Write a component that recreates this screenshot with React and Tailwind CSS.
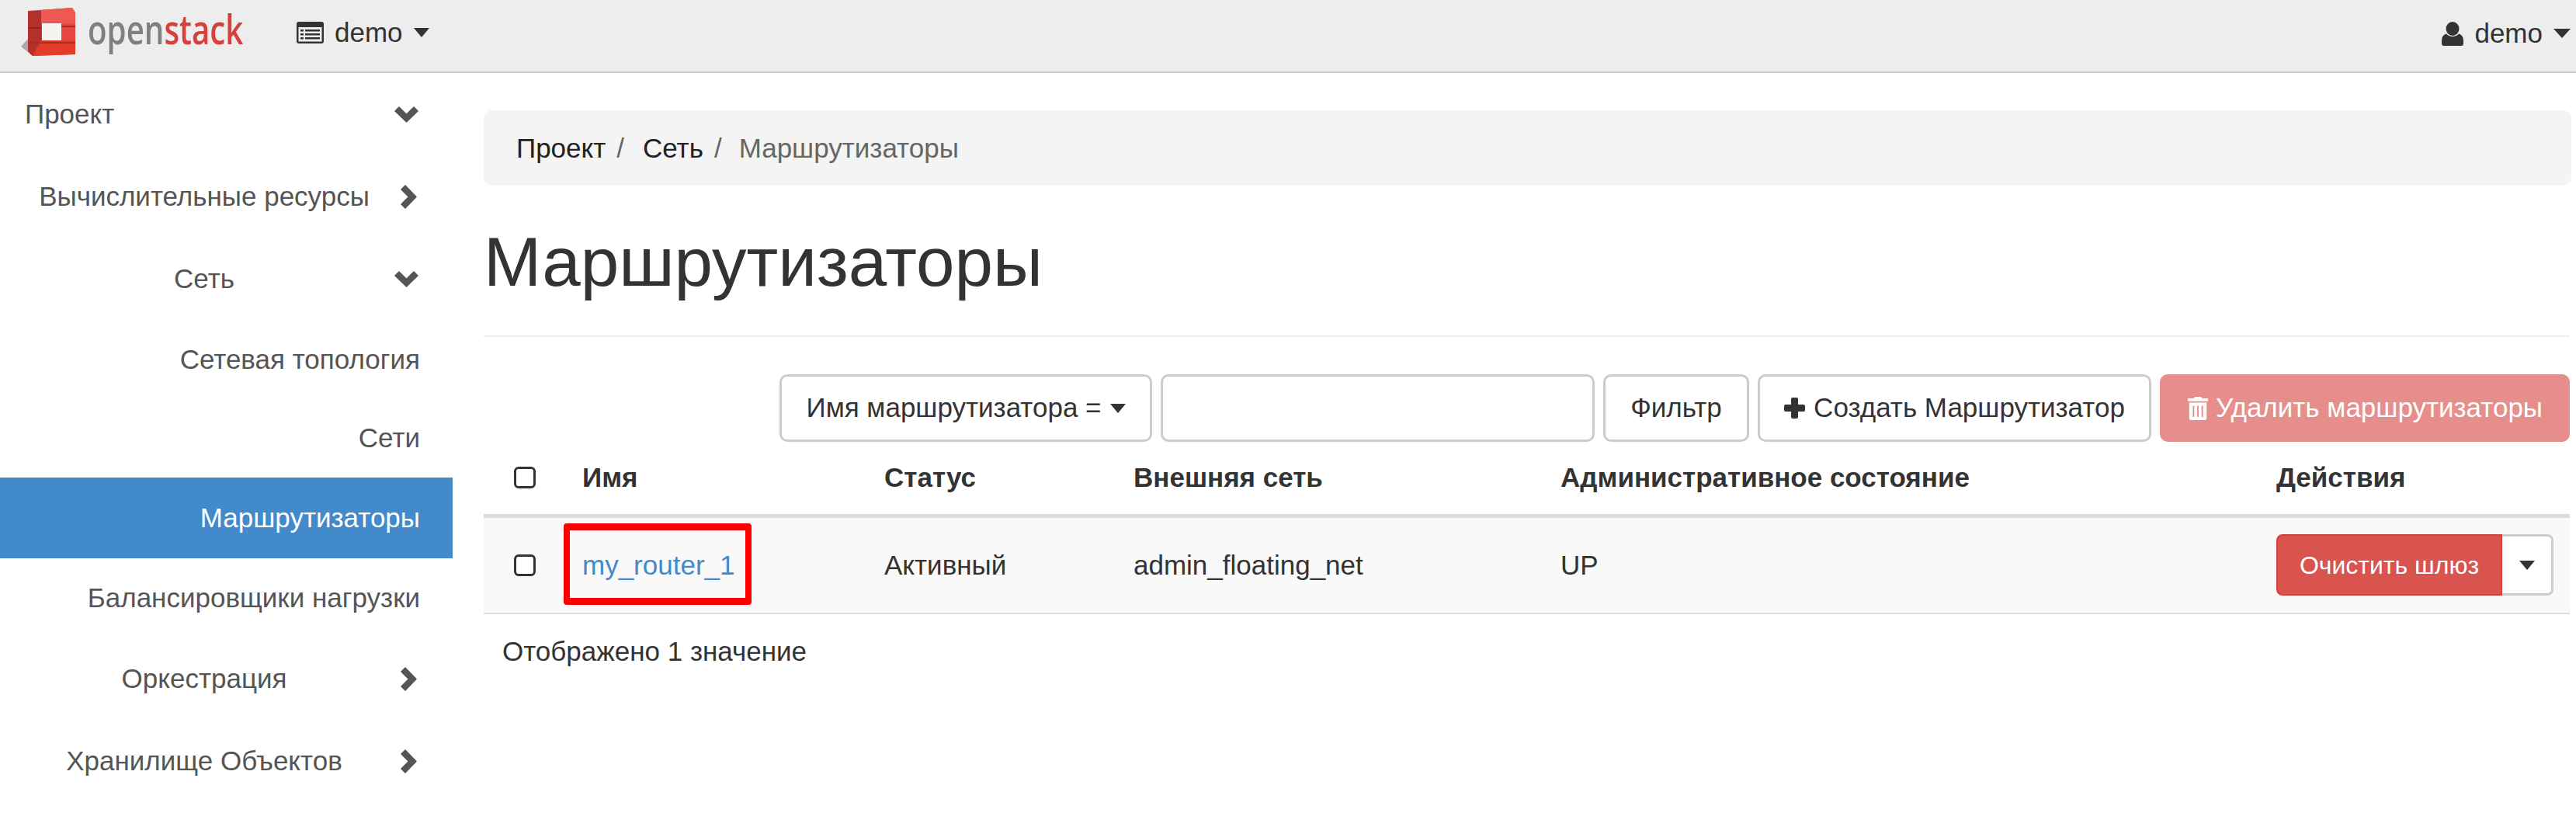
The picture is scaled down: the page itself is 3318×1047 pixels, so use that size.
import { FaTrashAlt } from 'react-icons/fa';

const Caret = ({ className = '' }) => (
  <span className={`inline-block w-0 h-0 border-x-[10px] border-t-[12px] border-x-transparent border-t-[#333] ${className}`}></span>
);

const ChevronRight = ({ className = '' }) => (
  <svg viewBox="0 0 21 31" className={`w-[21px] h-[31px] shrink-0 ${className}`}>
    <path d="M6 1 L20 15.5 L6 30 L1 25 L10.5 15.5 L1 6 Z" fill="#555" stroke="#555" strokeWidth="1.5" strokeLinejoin="round" />
  </svg>
);

const ChevronDown = ({ className = '' }) => (
  <svg viewBox="0 0 31 21" className={`w-[31px] h-[21px] shrink-0 ${className}`}>
    <path d="M1 6 L6 1 L15.5 10.5 L25 1 L30 6 L15.5 20 Z" fill="#555" stroke="#555" strokeWidth="1.5" strokeLinejoin="round" />
  </svg>
);

const Logo = () => (
  <svg viewBox="0 0 340 92" className="w-[340px] h-[92px] shrink-0 blur-[0.6px]">
    <polygon points="27,60 36,50 42,72" fill="#aaa" />
    <polygon points="36,14 93,10 97,16 97,70 42,72 36,66" fill="#d8392c" />
    <polygon points="36,14 53,14 53,66 42,72 36,66" fill="#b5302a" />
    <polygon points="53,13 93,10 97,16 97,30 53,30" fill="#ee5853" />
    <polygon points="53,52 97,52 97,70 42,72" fill="#e23d28" />
    <polygon points="78,30 97,30 97,52 78,52" fill="#e8483f" />
    <rect x="36" y="35" width="17" height="2" fill="#8c2420" />
    <rect x="36" y="54" width="61" height="2" fill="#a82c26" />
    <rect x="78" y="33" width="19" height="2" fill="#a82c26" />
    <rect x="54" y="30" width="25" height="22" fill="#f6f4f1" />
    <text transform="translate(113 57) scale(0.76 1)" fontSize="53" fontWeight="600" fontFamily="'Open Sans', sans-serif">
      <tspan fill="#808080">open</tspan>
      <tspan fill="#d8403c">stack</tspan>
    </text>
  </svg>
);

const ListIcon = () => (
  <svg viewBox="0 0 35 28" className="w-[35px] h-[28px] shrink-0">
    <rect width="35" height="28" rx="3" fill="#333" />
    <rect x="2.5" y="7" width="30" height="18.5" fill="#ededed" />
    <rect x="5" y="10" width="4" height="2.5" fill="#333" />
    <rect x="5" y="15" width="4" height="2.5" fill="#333" />
    <rect x="5" y="20" width="4" height="2.5" fill="#333" />
    <rect x="11" y="10" width="19" height="2.5" fill="#333" />
    <rect x="11" y="15" width="19" height="2.5" fill="#333" />
    <rect x="11" y="20" width="19" height="2.5" fill="#333" />
  </svg>
);

const UserIcon = () => (
  <svg viewBox="0 0 28 31" className="w-[28px] h-[31px] shrink-0">
    <ellipse cx="14" cy="9" rx="8.5" ry="9" fill="#333" />
    <path d="M6 15.5 C9 20 19 20 22 15.5 C26 16.5 28 20 28 25 L28 28 Q28 31 25 31 L3 31 Q0 31 0 28 L0 25 C0 20 2 16.5 6 15.5 Z" fill="#333" />
  </svg>
);

const PlusIcon = () => (
  <svg viewBox="0 0 27 27" className="w-[27px] h-[27px] shrink-0">
    <path d="M9 2 Q9 0 11 0 L16 0 Q18 0 18 2 L18 9 L25 9 Q27 9 27 11 L27 16 Q27 18 25 18 L18 18 L18 25 Q18 27 16 27 L11 27 Q9 27 9 25 L9 18 L2 18 Q0 18 0 16 L0 11 Q0 9 2 9 L9 9 Z" fill="#333" />
  </svg>
);

const SideItem = ({ label, height, icon }) => (
  <div className={`flex items-center ${height}`}>
    <span className="w-[526px] text-center">{label}</span>
    {icon === 'down' ? <ChevronDown className="-ml-[18px]" /> : <ChevronRight className="-ml-[10px]" />}
  </div>
);

const SideLeaf = ({ label, height, active }) => (
  <div className={`flex items-center justify-end pr-[42px] ${height} ${active ? 'bg-[#428aca] text-white' : ''}`}>
    {label}
  </div>
);

const Sidebar = () => (
  <aside className="w-[583px] shrink-0 text-[35px] text-[#555]">
    <div className="flex items-center justify-between h-[106px] pl-[32px] pr-[44px]">
      <span>Проект</span>
      <ChevronDown />
    </div>
    <SideItem label="Вычислительные ресурсы" height="h-[106px]" icon="right" />
    <SideItem label="Сеть" height="h-[106px]" icon="down" />
    <SideLeaf label="Сетевая топология" height="h-[102px]" />
    <SideLeaf label="Сети" height="h-[101px]" />
    <SideLeaf label="Маршрутизаторы" height="h-[104px]" active />
    <SideLeaf label="Балансировщики нагрузки" height="h-[102px]" />
    <SideItem label="Оркестрация" height="h-[106px]" icon="right" />
    <SideItem label="Хранилище Объектов" height="h-[106px]" icon="right" />
  </aside>
);

const Checkbox = () => (
  <input type="checkbox" className="appearance-none block w-[28px] h-[28px] bg-white border-[3px] border-[#333] rounded-[6px]" />
);

const Toolbar = () => (
  <div className="flex justify-end gap-[11px] mt-[48px] text-[35px] text-[#333] h-[87px]">
    <button className="flex items-center justify-center gap-[11px] w-[480px] bg-white border-[3px] border-[#ccc] rounded-[10px]">
      <span>Имя маршрутизатора =</span>
      <Caret />
    </button>
    <input className="w-[559px] bg-white border-[3px] border-[#ccc] rounded-[10px]" />
    <button className="w-[188px] bg-white border-[3px] border-[#ccc] rounded-[10px]">Фильтр</button>
    <button className="flex items-center justify-center gap-[11px] w-[507px] bg-white border-[3px] border-[#ccc] rounded-[10px]">
      <PlusIcon />
      <span>Создать Маршрутизатор</span>
    </button>
    <button className="flex items-center justify-center gap-[9px] w-[528px] bg-[#e58e8b] text-white rounded-[10px]">
      <FaTrashAlt className="w-[28px] h-[30px]" />
      <span>Удалить маршрутизаторы</span>
    </button>
  </div>
);

const RouterTable = () => (
  <table className="w-full table-fixed border-collapse text-[35px] text-[#333]">
    <thead>
      <tr className="h-[95px] border-b-[5px] border-[#ddd] text-left font-bold">
        <th className="w-[110px] pl-[39px]"><Checkbox /></th>
        <th className="w-[389px] px-[17px]">Имя</th>
        <th className="w-[321px] px-[17px]">Статус</th>
        <th className="w-[550px] px-[17px]">Внешняя сеть</th>
        <th className="w-[922px] px-[17px]">Административное состояние</th>
        <th className="px-[17px]">Действия</th>
      </tr>
    </thead>
    <tbody>
      <tr className="h-[126px] bg-[#f9f9f9] border-b-[2px] border-[#ddd]">
        <td className="pl-[39px]"><Checkbox /></td>
        <td className="relative px-[17px]">
          <a className="text-[#428bca]">my_router_1</a>
          <span className="absolute left-[-7px] top-[7px] w-[242px] h-[105px] border-x-[8px] border-y-[9px] border-[#ff0000] rounded-[4px]"></span>
        </td>
        <td className="px-[17px]">Активный</td>
        <td className="px-[17px]">admin_floating_net</td>
        <td className="px-[17px]">UP</td>
        <td className="px-[17px]">
          <div className="flex h-[79px]">
            <button className="w-[291px] bg-[#d9534f] border-[2px] border-[#d43f3a] rounded-l-[8px] text-white text-[32px]">Очистить шлюз</button>
            <button className="w-[66px] flex items-center justify-center bg-white border-[3px] border-l-0 border-[#ccc] rounded-r-[8px]">
              <Caret />
            </button>
          </div>
        </td>
      </tr>
    </tbody>
  </table>
);

export default function App() {
  return (
    <div className="h-[1047px] overflow-hidden bg-white font-['Liberation_Sans',Arial,sans-serif]">
      {/* Top bar */}
      <header className="flex items-center h-[94px] bg-[#ededed] border-b-[2px] border-[#ccc] text-[35px] text-[#333]">
        <Logo />
        <div className="flex items-center ml-[42px] pb-[8px]">
          <ListIcon />
          <span className="ml-[14px]">demo</span>
          <Caret className="ml-[14px]" />
        </div>
        <div className="flex items-center ml-auto pr-[7px] pb-[6px]">
          <UserIcon />
          <span className="ml-[14px]">demo</span>
          <Caret className="ml-[14px] border-x-[11px]" />
        </div>
      </header>

      <div className="flex">
        <Sidebar />
        <main className="flex-1 pl-[40px] pr-[8px] pt-[48px]">
          <nav className="flex items-center h-[97px] -mr-[2px] pl-[42px] pt-[2px] bg-[#f4f4f4] rounded-[10px] text-[35px] text-[#222]">
            <span>Проект</span>
            <span className="text-[#666] ml-[14px]">/</span>
            <span className="ml-[24px]">Сеть</span>
            <span className="text-[#666] ml-[14px]">/</span>
            <span className="ml-[22px] text-[#666]">Маршрутизаторы</span>
          </nav>
          <h1 className="mt-[50px] text-[89px] leading-[96px] text-[#333]">Маршрутизаторы</h1>
          <hr className="mt-[47px] border-t-[2px] border-[#eee]" />
          <Toolbar />
          <RouterTable />
          <p className="mt-[22px] pl-[24px] text-[35px] text-[#333]">Отображено 1 значение</p>
        </main>
      </div>
    </div>
  );
}
